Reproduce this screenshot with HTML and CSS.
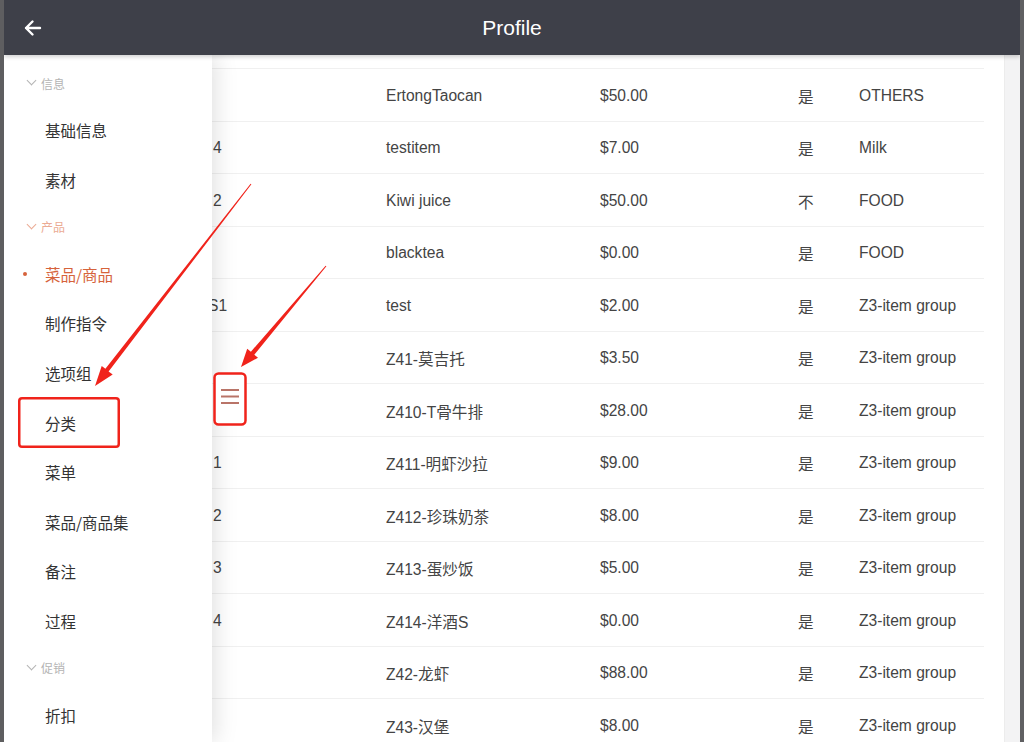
FILE: index.html
```html
<!DOCTYPE html>
<html lang="zh">
<head>
    <meta charset="UTF-8">
    <meta name="viewport" content="width=device-width, initial-scale=1.0">
    <title>Profile</title>
    <link rel="stylesheet" href="styles.css">
</head>
<body>
    <div class="frame">
        <header class="topbar">
            <svg class="back" width="20" height="20" viewBox="0 0 20 20">
                <path d="M17 10H3M9.5 3.5L3 10l6.5 6.5" fill="none" stroke="#fff" stroke-width="2.4" stroke-linecap="round" stroke-linejoin="round"/>
            </svg>
            <h1 class="title">Profile</h1>
        </header>
        <div class="main">
            <nav class="drawer">
                <div class="group"><span class="chev"></span>信息</div>
                <div class="item">基础信息</div>
                <div class="item">素材</div>
                <div class="group group-on"><span class="chev"></span>产品</div>
                <div class="item item-on">菜品/商品</div>
                <div class="item">制作指令</div>
                <div class="item">选项组</div>
                <div class="item marked">分类</div>
                <div class="item">菜单</div>
                <div class="item">菜品/商品集</div>
                <div class="item">备注</div>
                <div class="item">过程</div>
                <div class="group"><span class="chev"></span>促销</div>
                <div class="item">折扣</div>
            </nav>
            <section class="table">
                <div class="row partial"></div>
                <div class="row"><span></span><span>ErtongTaocan</span><span>$50.00</span><span>是</span><span>OTHERS</span></div>
                <div class="row"><span>4</span><span>testitem</span><span>$7.00</span><span>是</span><span>Milk</span></div>
                <div class="row"><span>2</span><span>Kiwi juice</span><span>$50.00</span><span>不</span><span>FOOD</span></div>
                <div class="row"><span></span><span>blacktea</span><span>$0.00</span><span>是</span><span>FOOD</span></div>
                <div class="row"><span class="cut">S1</span><span>test</span><span>$2.00</span><span>是</span><span>Z3-item group</span></div>
                <div class="row"><span></span><span>Z41-莫吉托</span><span>$3.50</span><span>是</span><span>Z3-item group</span></div>
                <div class="row"><span></span><span>Z410-T骨牛排</span><span>$28.00</span><span>是</span><span>Z3-item group</span></div>
                <div class="row"><span>1</span><span>Z411-明虾沙拉</span><span>$9.00</span><span>是</span><span>Z3-item group</span></div>
                <div class="row"><span>2</span><span>Z412-珍珠奶茶</span><span>$8.00</span><span>是</span><span>Z3-item group</span></div>
                <div class="row"><span>3</span><span>Z413-蛋炒饭</span><span>$5.00</span><span>是</span><span>Z3-item group</span></div>
                <div class="row"><span>4</span><span>Z414-洋酒S</span><span>$0.00</span><span>是</span><span>Z3-item group</span></div>
                <div class="row"><span></span><span>Z42-龙虾</span><span>$88.00</span><span>是</span><span>Z3-item group</span></div>
                <div class="row"><span></span><span>Z43-汉堡</span><span>$8.00</span><span>是</span><span>Z3-item group</span></div>
            </section>
            <div class="scroll"></div>
        </div>
        <!-- annotation layer drawn over the screenshot -->
        <svg class="marks" width="1024" height="742" viewBox="0 0 1024 742">
            <polygon fill="#f0231b" points="251.4,184.3 108.6,371.6 112.7,374.5 95,386 101.7,365.9 105.4,368.8 250.6,183.7"/>
            <polygon fill="#f0231b" points="326.4,266.3 254.3,354.7 258,357.7 241,367 247.2,348.7 250.9,351.7 325.6,265.7"/>
            <rect x="214.5" y="373.5" width="31" height="51" rx="4" fill="#fff" stroke="#f0231b" stroke-width="2.5"/>
            <g stroke="#b97468" stroke-width="2">
                <line x1="221" y1="390" x2="239" y2="390"/>
                <line x1="221" y1="396.5" x2="239" y2="396.5"/>
                <line x1="221" y1="403" x2="239" y2="403"/>
            </g>
        </svg>
    </div>
</body>
</html>
```

FILE: styles.css
```css
body {
    margin: 0;
    background: #5c5c5c;
    font-family: "Liberation Sans", "Noto Sans CJK SC", sans-serif;
}
.frame {
    position: relative;
    height: 742px;
    overflow: hidden;
    border-left: 4px solid #5e5e60;
    border-right: 4px solid #606062;
    background: #fff;
    display: flex;
    flex-direction: column;
}
.topbar {
    height: 55px;
    flex: none;
    background: #3e4049;
    display: flex;
    align-items: center;
    justify-content: center;
    position: relative;
    z-index: 3;
    box-shadow: 0 2px 4px rgba(0,0,0,0.18);
}
.back {
    position: absolute;
    left: 19px;
    top: 18px;
}
.title {
    margin: 0;
    color: #fff;
    font-weight: normal;
    font-size: 21px;
}
.main {
    flex: 1;
    display: flex;
    min-height: 0;
}
.drawer {
    width: 208px;
    flex: none;
    background: #fff;
    padding-top: 6px;
    position: relative;
    z-index: 2;
    box-shadow: 3px 0 22px rgba(0,0,0,0.13);
    font-family: "Noto Sans CJK SC", sans-serif;
}
.group {
    height: 44.4px;
    display: flex;
    align-items: center;
    padding-left: 23px;
    font-size: 12px;
    color: #b4b4b4;
}
.group-on {
    color: #ebab94;
}
.chev {
    width: 6px;
    height: 6px;
    border-right: 1px solid currentColor;
    border-bottom: 1px solid currentColor;
    transform: rotate(45deg);
    margin: -5px 6px 0 1px;
}
.item {
    height: 49.6px;
    display: flex;
    align-items: center;
    padding-left: 41px;
    font-size: 15.5px;
    color: #333;
    box-sizing: border-box;
}
.item-on {
    color: #d6633b;
    position: relative;
}
.item-on::before {
    content: "";
    position: absolute;
    left: 19px;
    top: 23px;
    width: 4px;
    height: 4px;
    border-radius: 50%;
    background: #d6633b;
}
.marked {
    width: 102px;
    margin-left: 14px;
    padding-left: 27px;
    height: 51px;
    margin-top: -0.7px;
    margin-bottom: -0.7px;
    border-radius: 4px;
    box-shadow: inset 0 0 0 2.5px #f0231b;
}
.table {
    flex: 1;
    padding-right: 20px;
    overflow: hidden;
    color: #444;
    font-size: 15.6px;
}
.row {
    height: 52.5px;
    box-sizing: border-box;
    padding-top: 2px;
    border-bottom: 1px solid #f0f0f0;
    display: grid;
    grid-template-columns: 174px 214px 198px 61px 1fr;
    align-items: center;
}
.row span:first-child {
    padding-left: 1px;
}
.row .cut {
    margin-left: -5px;
}
.partial {
    height: 14px;
    padding-top: 0;
}
.scroll {
    width: 15px;
    flex: none;
    background: #f3f3f4;
    border-left: 1px solid #ececec;
}
.marks {
    position: absolute;
    left: -4px;
    top: 0;
    z-index: 5;
    pointer-events: none;
}
```
